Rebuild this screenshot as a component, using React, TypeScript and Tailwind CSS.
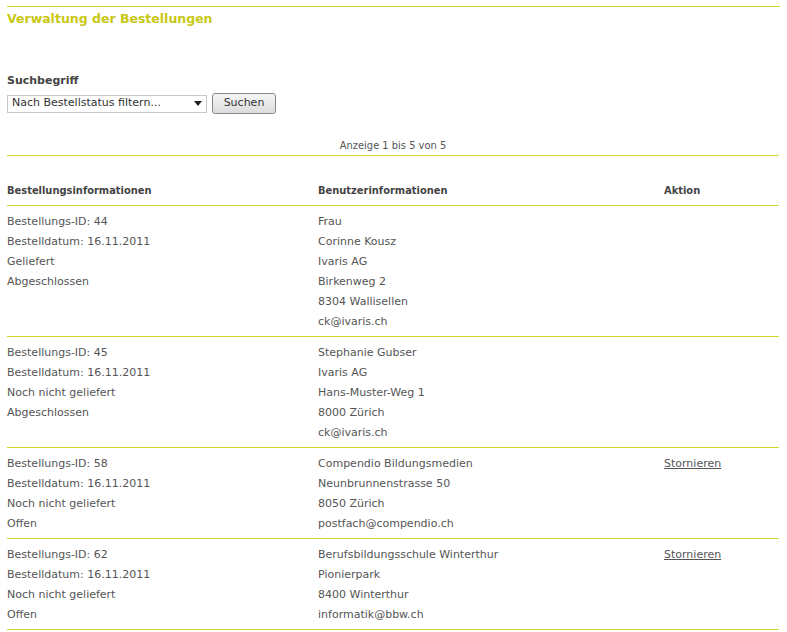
import React from "react";

type Order = {
    info: string[];
    user: string[];
    cancel: boolean;
};

const orders: Order[] = [
    {
        info: ["Bestellungs-ID: 44", "Bestelldatum: 16.11.2011", "Geliefert", "Abgeschlossen"],
        user: ["Frau", "Corinne Kousz", "Ivaris AG", "Birkenweg 2", "8304 Wallisellen", "ck@ivaris.ch"],
        cancel: false,
    },
    {
        info: ["Bestellungs-ID: 45", "Bestelldatum: 16.11.2011", "Noch nicht geliefert", "Abgeschlossen"],
        user: ["Stephanie Gubser", "Ivaris AG", "Hans-Muster-Weg 1", "8000 Zürich", "ck@ivaris.ch"],
        cancel: false,
    },
    {
        info: ["Bestellungs-ID: 58", "Bestelldatum: 16.11.2011", "Noch nicht geliefert", "Offen"],
        user: ["Compendio Bildungsmedien", "Neunbrunnenstrasse 50", "8050 Zürich", "postfach@compendio.ch"],
        cancel: true,
    },
    {
        info: ["Bestellungs-ID: 62", "Bestelldatum: 16.11.2011", "Noch nicht geliefert", "Offen"],
        user: ["Berufsbildungsschule Winterthur", "Pionierpark", "8400 Winterthur", "informatik@bbw.ch"],
        cancel: true,
    },
];

export default function App() {
    return (
        <div className="min-h-[632px] bg-white px-[7px] pt-[6px] font-['Verdana','DejaVu_Sans',sans-serif] text-[11px] text-[#555]">
            <div className="border-t border-[#d4d42a]">
                <h1 className="pt-[4px] text-[12.5px] leading-[16px] font-bold text-[#c8c814]">
                    Verwaltung der Bestellungen
                </h1>
            </div>

            <div className="mt-[47px]">
                <p className="text-[11px] leading-[14px] font-bold text-[#444]">Suchbegriff</p>
                <div className="mt-[5px] flex items-center gap-[5px]">
                    <div className="flex h-[18px] w-[200px] items-center justify-between border border-[#c8c8c8] bg-white pr-[4px] pl-[4px]">
                        <span className="text-[11px] text-[#333]">Nach Bestellstatus filtern...</span>
                        <svg width="8" height="5" viewBox="0 0 8 5">
                            <path d="M0 0h8L4 5z" fill="#222" />
                        </svg>
                    </div>
                    <button className="h-[21px] w-[64px] rounded-[3px] border border-[#888] bg-gradient-to-b from-[#f6f6f6] to-[#dcdcdc] text-[11px] text-[#333]">
                        Suchen
                    </button>
                </div>
            </div>

            <div className="mt-[25px] w-[772px]">
                <p className="border-b border-[#d4d42a] pb-[2px] text-center font-['DejaVu_Sans_Condensed',sans-serif] text-[11px] leading-[14px] text-[#555]">
                    Anzeige 1 bis 5 von 5
                </p>

                <div className="flex items-end border-b border-[#d4d42a] pt-[28px] pb-[7px] font-['DejaVu_Sans_Condensed',sans-serif] text-[11px] leading-[14px] font-bold text-[#444]">
                    <div className="w-[311px]">Bestellungsinformationen</div>
                    <div className="w-[346px]">Benutzerinformationen</div>
                    <div>Aktion</div>
                </div>

                {orders.map((o, i) => (
                    <div key={i} className="flex border-b border-[#d4d42a] pt-[6px] pb-[4px] leading-[20px]">
                        <div className="w-[311px]">
                            {o.info.map((l) => (
                                <div key={l}>{l}</div>
                            ))}
                        </div>
                        <div className="w-[346px]">
                            {o.user.map((l) => (
                                <div key={l}>{l}</div>
                            ))}
                        </div>
                        <div>
                            {o.cancel && (
                                <a href="#" className="underline">
                                    Stornieren
                                </a>
                            )}
                        </div>
                    </div>
                ))}
            </div>
        </div>
    );
}
